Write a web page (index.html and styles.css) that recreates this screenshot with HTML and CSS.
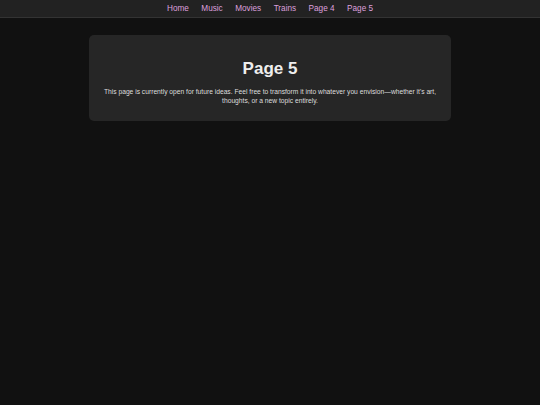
FILE: index.html
```html
<!DOCTYPE html>
<html lang="en">
<head>
<meta charset="utf-8">
<title>Page 5</title>
<link rel="stylesheet" href="styles.css">
</head>
<body>
<nav class="topnav">
  <a href="#">Home</a>
  <a href="#">Music</a>
  <a href="#">Movies</a>
  <a href="#">Trains</a>
  <a href="#">Page 4</a>
  <a href="#">Page 5</a>
</nav>
<main class="content">
  <section class="card">
    <h1 class="card-title">Page 5</h1>
    <p class="card-text">This page is currently open for future ideas. Feel free to transform it into whatever you envision—whether it's art, thoughts, or a new topic entirely.</p>
  </section>
</main>
</body>
</html>
```

FILE: styles.css
```css
html, body {
  margin: 0;
  padding: 0;
  background: #111111;
  font-family: "Liberation Sans", Arial, sans-serif;
  color: #e0e0e0;
}

.topnav {
  display: flex;
  justify-content: center;
  gap: 12.5px;
  height: 17px;
  align-items: center;
  background: #222222;
  border-bottom: 1px solid #333333;
}

.topnav a {
  color: #dda0dd;
  text-decoration: none;
  font-size: 8.2px;
  line-height: 17px;
}

.content {
  padding: 17px 89px;
}

.card {
  background: #262626;
  border-radius: 5px;
  padding: 24px 8px 16px;
  text-align: center;
}

.card-title {
  margin: 0 0 9px;
  font-size: 17px;
  line-height: 20px;
  font-weight: bold;
  color: #eeeeee;
}

.card-text {
  margin: 0;
  font-size: 6.7px;
  line-height: 8.5px;
  color: #dddddd;
}
```
